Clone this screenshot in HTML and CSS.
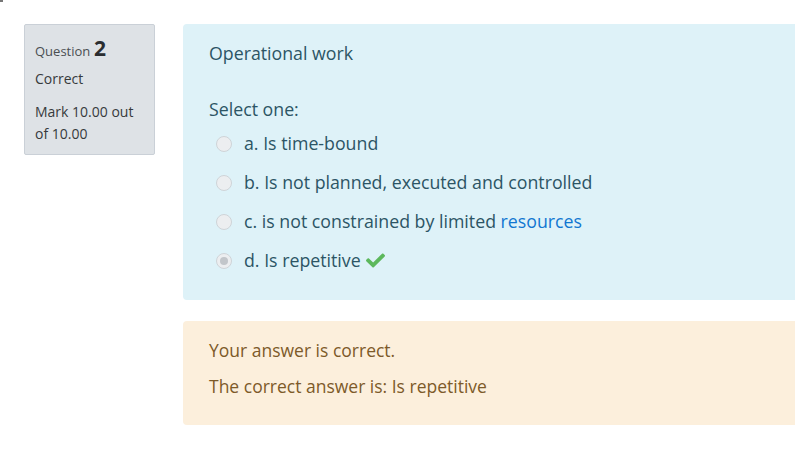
FILE: index.html
```html
<!DOCTYPE html>
<html>
<head>
<meta charset="utf-8">
<link rel="stylesheet" href="styles.css">
</head>
<body>
<div class="corner"></div>
<div class="que">
  <div class="info">
    <div class="qno"><span class="qlabel">Question</span> <span class="num">2</span></div>
    <div class="state">Correct</div>
    <div class="grade">Mark 10.00 out of 10.00</div>
  </div>
  <div class="content">
    <div class="formulation">
      <div class="qtext">Operational work</div>
      <div class="prompt">Select one:</div>
      <div class="answer">
        <div class="opt"><span class="radio"></span><span>a. Is time-bound</span></div>
        <div class="opt"><span class="radio"></span><span>b. Is not planned, executed and controlled</span></div>
        <div class="opt"><span class="radio"></span><span>c. is not constrained by limited <a class="link">resources</a></span></div>
        <div class="opt"><span class="radio checked"></span><span>d. Is repetitive</span>
          <svg class="tick" viewBox="0 64 512 384" width="19" height="15"><path fill="#5cb85c" d="M173.9 439.4l-166.4-166.4c-10-10-10-26.2 0-36.2l36.2-36.2c10-10 26.2-10 36.2 0L192 312.7 432.1 72.6c10-10 26.2-10 36.2 0l36.2 36.2c10 10 10 26.2 0 36.2l-294.4 294.4c-10 10-26.2 10-36.2 0z"/></svg>
        </div>
      </div>
    </div>
    <div class="outcome">
      <div class="fb">Your answer is correct.</div>
      <div class="fb second">The correct answer is: Is repetitive</div>
    </div>
  </div>
</div>
</body>
</html>
```
FILE: styles.css
```css
html, body {
  margin: 0;
  padding: 0;
  background: #fff;
  overflow: hidden;
  width: 795px;
  height: 467px;
  font-family: "Open Sans", "Noto Sans", sans-serif;
}
.corner {
  position: absolute;
  left: 0;
  top: 0;
  width: 3px;
  height: 2px;
  background: #777;
}
.que {
  display: flex;
  align-items: flex-start;
  padding: 24px 0 0 24px;
  gap: 28px;
}
.info {
  flex: 0 0 auto;
  width: 111px;
  padding: 8px 8px 9px 10px;
  background: #dee2e6;
  border: 1px solid #cad0d7;
  border-radius: 2px;
  color: #373a3c;
  font-size: 14px;
  line-height: 22px;
}
.qlabel {
  font-size: 13px;
  color: #4a4e52;
}
.num {
  font-size: 21px;
  font-weight: 700;
  color: #2a2d30;
}
.qno {
  height: 35px;
  line-height: 31px;
}
.state {
  margin-bottom: 11px;
}
.content {
  flex: 0 0 auto;
  width: 640px;
}
.formulation {
  background: #def2f8;
  border-radius: 4px;
  color: #2c5565;
  padding: 16px 26px 20px 26px;
  font-size: 17.75px;
  line-height: 27px;
}
.prompt {
  margin-top: 29px;
}
.answer {
  margin-top: 1px;
  padding-left: 7px;
}
.opt {
  display: flex;
  align-items: center;
  height: 39px;
}
.radio {
  flex: 0 0 auto;
  width: 14px;
  height: 14px;
  border: 1px solid #cfd4d8;
  border-radius: 50%;
  background: #eceef0;
  margin-right: 12px;
  position: relative;
}
.radio.checked::after {
  content: "";
  position: absolute;
  left: 3px;
  top: 3px;
  width: 8px;
  height: 8px;
  border-radius: 50%;
  background: #c2c6ca;
}
.link {
  color: #1177d1;
}
.tick {
  margin-left: 5px;
}
.outcome {
  margin-top: 21px;
  background: #fcefdc;
  border-radius: 4px;
  color: #7d5a29;
  padding: 16px 26px 25px 26px;
  font-size: 17.5px;
  line-height: 27px;
}
.fb.second {
  margin-top: 9px;
}
```
